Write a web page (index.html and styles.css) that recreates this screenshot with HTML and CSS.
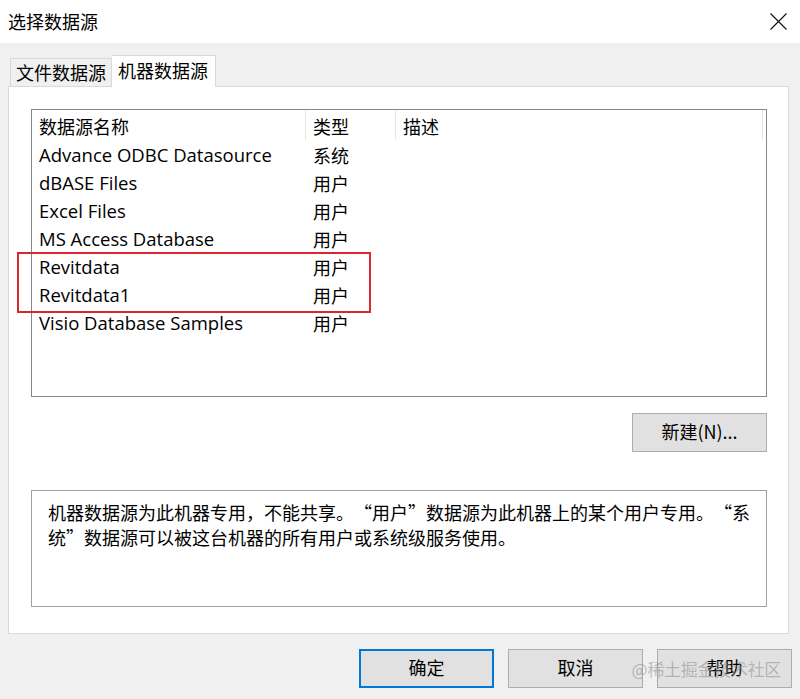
FILE: index.html
```html
<!DOCTYPE html>
<html lang="zh-CN">
<head>
<meta charset="utf-8">
<title>选择数据源</title>
<link rel="stylesheet" href="styles.css">
</head>
<body>
<div class="window">
  <header class="titlebar">
    <span class="title">选择数据源</span>
    <span class="close" aria-label="关闭">
      <svg width="17" height="17" viewBox="0 0 17 17"><path d="M0.5 0.5 L16.5 16.5 M16.5 0.5 L0.5 16.5" stroke="#111" stroke-width="1.1" fill="none"/></svg>
    </span>
  </header>
  <main class="client">
    <div class="tabs">
      <div class="tab">文件数据源</div>
      <div class="tab active">机器数据源</div>
    </div>
    <section class="panel">
      <div class="listview">
        <div class="lv-header">
          <div class="col col-name">数据源名称</div>
          <div class="col col-type">类型</div>
          <div class="col col-desc">描述</div>
        </div>
        <div class="lv-row"><div class="col col-name">Advance ODBC Datasource</div><div class="col col-type">系统</div><div class="col col-desc"></div></div>
        <div class="lv-row"><div class="col col-name">dBASE Files</div><div class="col col-type">用户</div><div class="col col-desc"></div></div>
        <div class="lv-row"><div class="col col-name">Excel Files</div><div class="col col-type">用户</div><div class="col col-desc"></div></div>
        <div class="lv-row"><div class="col col-name">MS Access Database</div><div class="col col-type">用户</div><div class="col col-desc"></div></div>
        <div class="lv-row"><div class="col col-name">Revitdata</div><div class="col col-type">用户</div><div class="col col-desc"></div></div>
        <div class="lv-row"><div class="col col-name">Revitdata1</div><div class="col col-type">用户</div><div class="col col-desc"></div></div>
        <div class="lv-row"><div class="col col-name">Visio Database Samples</div><div class="col col-type">用户</div><div class="col col-desc"></div></div>
      </div>
      <div class="highlight"></div>
      <div class="new-row">
        <button class="btn">新建(N)...</button>
      </div>
      <div class="desc-box">
        <p class="desc-text">机器数据源为此机器专用，不能共享。<span class="q-open">“</span>用户<span class="q-close">”</span>数据源为此机器上的某个用户专用。<span class="q-open">“</span>系<wbr>统<span class="q-close">”</span>数据源可以被这台机器的所有用户或系统级服务使用。</p>
      </div>
    </section>
    <div class="actions">
      <button class="btn default">确定</button>
      <button class="btn">取消</button>
      <button class="btn">帮助</button>
    </div>
    <div class="watermark">@稀土掘金技术社区</div>
  </main>
</div>
</body>
</html>
```
FILE: styles.css
```css
* { box-sizing: border-box; }
html, body {
  margin: 0;
  padding: 0;
  width: 800px;
  height: 699px;
  overflow: hidden;
}
body {
  font-family: "Open Sans", "Noto Sans CJK SC", sans-serif;
  font-size: 18px;
  color: #000;
  background: #f0f0f0;
}
.window {
  width: 800px;
  height: 699px;
  display: flex;
  flex-direction: column;
}
.titlebar {
  height: 43px;
  background: #fff;
  display: flex;
  align-items: center;
  justify-content: space-between;
  padding: 0 13px 2px 8px;
}
.title {
  font-family: "Noto Sans CJK SC", sans-serif;
  font-size: 18px;
  line-height: 24px;
}
.close {
  display: flex;
  width: 17px;
  height: 17px;
  margin-top: 2px;
}
.client {
  position: relative;
  flex: 1;
  background: #f0f0f0;
  padding: 12px 11px 0 8px;
  display: flex;
  flex-direction: column;
}
.tabs {
  display: flex;
  align-items: flex-end;
  height: 31px;
  padding-left: 2px;
  position: relative;
  z-index: 1;
}
.tab {
  flex: none;
  white-space: nowrap;
  font-family: "Noto Sans CJK SC", sans-serif;
  height: 28px;
  line-height: 27px;
  padding: 0 5px 0 5px;
  border: 1px solid #d9d9d9;
  border-bottom: none;
  background: #f0f0f0;
  color: #000;
}
.tab.active {
  height: 32px;
  margin-bottom: -1px;
  background: #fff;
  padding: 0 7px 0 6px;
  line-height: 29px;
  border-left: none;
}
.panel {
  position: relative;
  background: #fff;
  border: 1px solid #d9d9d9;
  height: 548px;
  padding: 22px 21px 0 22px;
  display: flex;
  flex-direction: column;
}
.listview {
  height: 288px;
  border: 1px solid #828790;
  background: #fff;
  display: flex;
  flex-direction: column;
}
.lv-header, .lv-row {
  display: flex;
}
.lv-header {
  height: 30px;
  align-items: center;
}
.lv-row {
  height: 28px;
  align-items: center;
}
.col {
  white-space: nowrap;
  line-height: 28px;
  padding-top: 2px;
}
.col-name { width: 274px; padding-left: 7px; }
.col-type { width: 90px; padding-left: 7px; font-family: "Noto Sans CJK SC", sans-serif; }
.col-desc { width: 367px; padding-left: 7px; font-family: "Noto Sans CJK SC", sans-serif; }
.lv-header .col {
  height: 30px;
  line-height: 30px;
  padding-top: 1px;
  border-right: 1px solid #e5e5e5;
  font-family: "Noto Sans CJK SC", sans-serif;
}
.lv-row .col-name {
  font-family: "Open Sans", "Noto Sans CJK SC", sans-serif;
  font-size: 18.5px;
}
.highlight {
  position: absolute;
  left: 8px;
  top: 165px;
  width: 354px;
  height: 61px;
  border: 2.5px solid #d9262f;
  pointer-events: none;
}
.new-row {
  display: flex;
  justify-content: flex-end;
  margin-top: 16px;
}
.btn {
  font-family: "Noto Sans CJK SC", sans-serif;
  font-size: 18px;
  color: #000;
  width: 135px;
  height: 39px;
  background: #e1e1e1;
  border: 1px solid #adadad;
  padding: 0 0 3px;
  margin: 0;
}
.btn.default {
  border: 2px solid #0078d7;
}
.desc-box {
  margin-top: 38px;
  height: 117px;
  border: 1px solid #a0a0a0;
  padding: 9px 20px 0 16px;
}
.desc-text {
  margin: 0;
  font-family: "Noto Sans CJK SC", sans-serif;
  line-height: 25px;
  width: 708px;
}
.q-open, .q-close {
  display: inline-block;
  width: 18px;
}
.q-open { text-align: right; }
.q-close { text-align: left; }
.actions {
  display: flex;
  justify-content: flex-end;
  gap: 14px;
  margin-top: 15px;
  margin-right: -3px;
}
.watermark {
  position: absolute;
  right: 19px;
  bottom: 18px;
  font-family: "Noto Sans CJK SC", sans-serif;
  font-size: 17px;
  color: rgba(140, 140, 140, 0.55);
  pointer-events: none;
  letter-spacing: -0.3px;
}
```
